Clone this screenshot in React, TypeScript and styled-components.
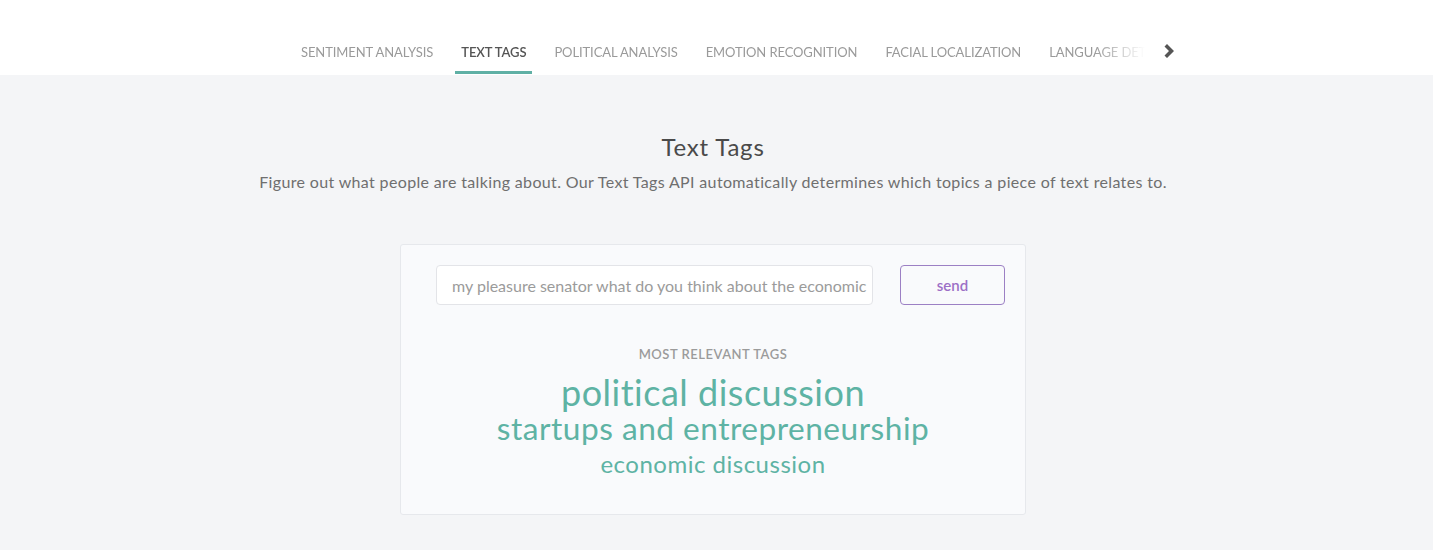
import React from "react";
import styled, { createGlobalStyle } from "styled-components";

const tabs = [
    "Sentiment Analysis",
    "Text Tags",
    "Political Analysis",
    "Emotion Recognition",
    "Facial Localization",
    "Language Detection",
];

const tags = [
    { label: "political discussion", size: 36 },
    { label: "startups and entrepreneurship", size: 31.6 },
    { label: "economic discussion", size: 24 },
];

const GlobalStyle = createGlobalStyle`
    body {
        margin: 0;
        background: #f4f5f7;
        font-family: "Lato", "Open Sans", sans-serif;
    }
`;

export default function App() {
    return (
        <>
            <GlobalStyle />
            <NavBar>
                <TabStrip>
                    {tabs.map((tab) => (
                        <Tab key={tab} active={tab === "Text Tags"}>
                            {tab}
                        </Tab>
                    ))}
                </TabStrip>
                <NextButton>
                    <svg width="11" height="14" viewBox="0 0 11 14">
                        <path
                            d="M1.5 2.5 L4 0 L11 7 L4 14 L1.5 11.5 L6 7 Z"
                            fill="#555"
                        />
                    </svg>
                </NextButton>
            </NavBar>
            <Main>
                <Title>Text Tags</Title>
                <Subtitle>
                    Figure out what people are talking about. Our Text Tags
                    API automatically determines which topics a piece of text
                    relates to.
                </Subtitle>
                <Card>
                    <InputRow>
                        <TextInput
                            readOnly
                            value="my pleasure senator what do you think about the economic"
                        />
                        <SendButton>send</SendButton>
                    </InputRow>
                    <TagsHeading>Most Relevant Tags</TagsHeading>
                    <TagList>
                        {tags.map((tag) => (
                            <Tag key={tag.label} size={tag.size}>
                                {tag.label}
                            </Tag>
                        ))}
                    </TagList>
                </Card>
            </Main>
        </>
    );
}

const NavBar = styled.nav`
    height: 75px;
    background: #fff;
    display: flex;
    align-items: stretch;
    padding-left: 295px;
    box-sizing: border-box;
`;

const TabStrip = styled.div`
    display: flex;
    gap: 16px;
    width: 850px;
    overflow: hidden;
    -webkit-mask-image: linear-gradient(to right, #000 94%, transparent 100%);
    mask-image: linear-gradient(to right, #000 94%, transparent 100%);
`;

const Tab = styled.div<{ active?: boolean }>`
    flex: none;
    display: flex;
    align-items: flex-end;
    padding: 0 6px 11px;
    font-size: 13px;
    letter-spacing: -0.1px;
    text-transform: uppercase;
    color: ${(p) => (p.active ? "#555" : "#9a9a9a")};
    font-weight: ${(p) => (p.active ? 600 : 400)};
    border-bottom: 3px solid ${(p) => (p.active ? "#5fb0a5" : "transparent")};
    margin-bottom: 1px;
`;

const NextButton = styled.div`
    display: flex;
    align-items: flex-end;
    padding-left: 18px;
    padding-bottom: 17px;
`;

const Main = styled.main`
    display: flex;
    flex-direction: column;
    align-items: center;
    padding: 57px 7px 0 0;
`;

const Title = styled.h1`
    margin: 0;
    font-size: 24px;
    font-weight: 400;
    letter-spacing: 0.8px;
    color: #4a4a4a;
    line-height: 30px;
`;

const Subtitle = styled.p`
    margin: 8px 0 0;
    font-size: 16px;
    color: #6f6f6f;
    letter-spacing: 0.35px;
    line-height: 24px;
`;

const Card = styled.section`
    margin-top: 50px;
    width: 626px;
    box-sizing: border-box;
    background: #f9fafc;
    border: 1px solid #e6e8ec;
    border-radius: 3px;
    padding: 20px 20px 32px 35px;
    display: flex;
    flex-direction: column;
    align-items: center;
`;

const InputRow = styled.div`
    align-self: stretch;
    display: flex;
    justify-content: space-between;
`;

const TextInput = styled.input`
    width: 437px;
    height: 40px;
    box-sizing: border-box;
    border: 1px solid #e3e4e8;
    border-radius: 4px;
    background: #fff;
    padding: 0 4px 0 15px;
    font-family: inherit;
    font-size: 16px;
    color: #9b9b9b;
    outline: none;
`;

const SendButton = styled.button`
    width: 105px;
    height: 40px;
    border: 1px solid #9c80c4;
    border-radius: 4px;
    background: transparent;
    font-family: inherit;
    font-size: 15px;
    font-weight: 600;
    color: #9c6fc6;
`;

const TagsHeading = styled.h2`
    margin: 41px 0 0 -15px;
    font-size: 13px;
    font-weight: 600;
    letter-spacing: 0.5px;
    text-transform: uppercase;
    color: #9b9b9b;
    line-height: 16px;
`;

const TagList = styled.div`
    margin: 12px 0 0 -15px;
    display: flex;
    flex-direction: column;
    align-items: center;
`;

const Tag = styled.span<{ size: number }>`
    font-size: ${(p) => p.size}px;
    line-height: 36px;
    color: #5eb3a4;
    letter-spacing: 0.5px;
`;
